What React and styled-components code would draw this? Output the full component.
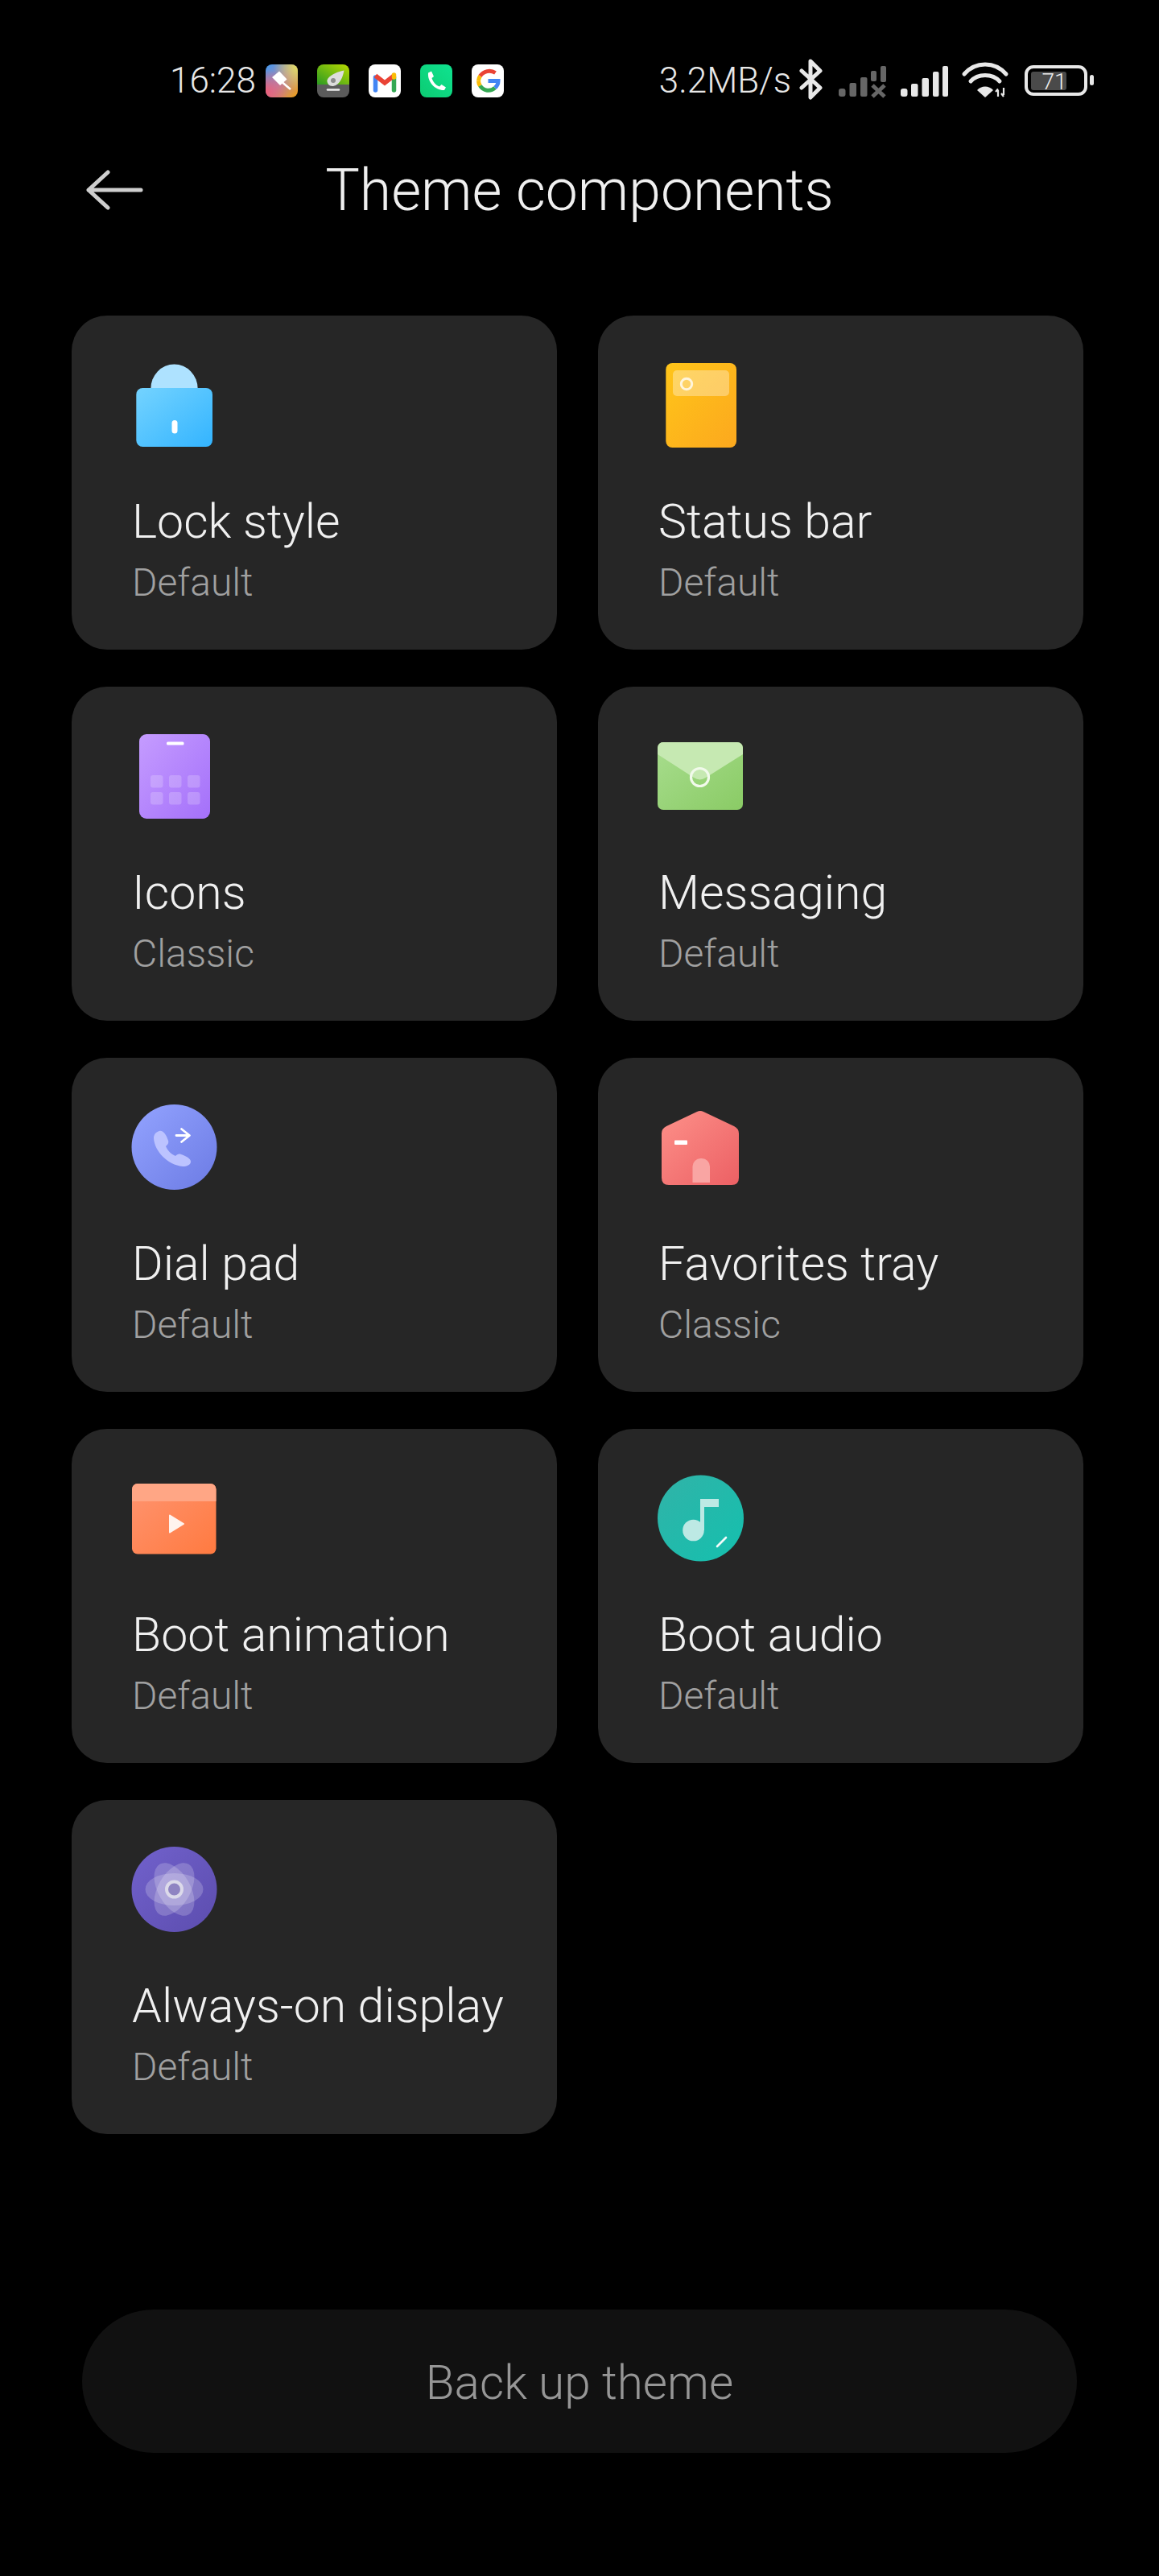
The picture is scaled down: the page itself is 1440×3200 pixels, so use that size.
import React from "react";
import styled, { createGlobalStyle } from "styled-components";

const Global = createGlobalStyle`
  html, body { margin: 0; padding: 0; background: #000; }
  body { font-family: Roboto, "Liberation Sans", sans-serif; font-weight: 300; }
`;

const Page = styled.div`
  width: 1440px;
  height: 3200px;
  background: #000;
  display: flex;
  flex-direction: column;
  overflow: hidden;
`;
const StatusBar = styled.div`
  display: flex;
  justify-content: space-between;
  align-items: center;
  height: 80px;
  margin-top: 60px;
  padding: 0 81px 0 211px;
  color: #e8e8e8;
`;
const StatusGroup = styled.div`
  display: flex;
  align-items: center;
  gap: ${(p) => p.$gap}px;
`;
const StatusText = styled.span`
  font-size: 44px;
  line-height: 48px;
  margin-right: ${(p) => p.$after || 0}px;
`;
const AppBadge = styled.svg`
  width: 40px;
  height: 41px;
  display: block;
`;
const StatusGlyphs = styled.svg`
  width: 366px;
  height: 60px;
  display: block;
  margin-left: 10px;
`;
const Header = styled.header`
  display: grid;
  grid-template-columns: 1fr auto 1fr;
  align-items: center;
  height: 92px;
  margin-top: 50px;
  padding: 0 107px;
`;
const BackArrow = styled.svg`
  width: 72px;
  height: 50px;
  display: block;
`;
const Title = styled.h1`
  margin: 2px 0 0;
  font-size: 71.5px;
  line-height: 90px;
  font-weight: 300;
  color: #efefef;
`;
const Grid = styled.main`
  display: grid;
  grid-template-columns: 603px 603px;
  column-gap: 51px;
  row-gap: 46px;
  margin-top: 110px;
  padding-left: 89px;
`;
const Card = styled.section`
  height: 415px;
  box-sizing: border-box;
  background: #262626;
  border-radius: 44px;
  padding: 28px 0 0 75px;
  display: flex;
  flex-direction: column;
`;
const IconBox = styled.svg`
  width: 150px;
  height: 150px;
  display: block;
  margin-left: -24px;
  flex: none;
`;
const CardTitle = styled.div`
  margin-top: 38px;
  font-size: 59px;
  line-height: 80px;
  color: #f0f0f0;
  white-space: nowrap;
`;
const CardValue = styled.div`
  margin-top: 4px;
  font-size: 48px;
  line-height: 64px;
  color: #a0a0a0;
`;
const BackupButton = styled.button`
  margin: 218px 102px 0;
  height: 178px;
  padding: 4px 0 0;
  border: 0;
  border-radius: 89px;
  background: #111111;
  color: #969696;
  font-family: inherit;
  font-weight: 300;
  font-size: 58.5px;
`;

const Grad = ({ id, from, to }) => (
  <linearGradient id={id} x1="0" y1="0" x2="1" y2="1">
    <stop offset="0" stopColor={from} />
    <stop offset="1" stopColor={to} />
  </linearGradient>
);

const LockIcon = () => (
  <>
    <Grad id="gLock" from="#74d3ff" to="#33b4ff" />
    <path d="M47.3 63a29.2 30.5 0 0 1 58.4 0z" fill="#aee2ff" />
    <rect x="29.3" y="62" width="94.7" height="73" rx="8" fill="url(#gLock)" />
    <rect x="73.5" y="102" width="7" height="16.5" rx="3.5" fill="#fff" />
  </>
);
const StatusIcon = () => (
  <>
    <Grad id="gStatus" from="#ffc519" to="#fca81e" />
    <rect x="37.3" y="31" width="87.7" height="105" rx="8" fill="url(#gStatus)" />
    <rect x="46" y="40" width="70" height="32" rx="5" fill="#fff" fillOpacity=".33" />
    <circle cx="63" cy="57" r="6.7" fill="none" stroke="#fff5dc" strokeWidth="3" />
  </>
);
const AppsIcon = () => (
  <>
    <Grad id="gApps" from="#c59cff" to="#a470fa" />
    <rect x="33" y="22" width="88" height="105" rx="9" fill="url(#gApps)" />
    <rect x="67" y="31.5" width="21.5" height="4" rx="1.5" fill="#fff" />
    {[47, 70, 93].flatMap((x) =>
      [73, 94].map((y) => (
        <rect key={`${x}-${y}`} x={x} y={y} width="15.5" height="15.5" rx="3" fill="#fff" fillOpacity=".2" />
      ))
    )}
  </>
);
const MessageIcon = () => (
  <>
    <Grad id="gMsg" from="#a8dd8e" to="#8acb65" />
    <rect x="27" y="32" width="106" height="84" rx="7" fill="url(#gMsg)" />
    <path d="M27 47V39a7 7 0 0 1 7-7h92a7 7 0 0 1 7 7v8l-46 29a14 14 0 0 1-15 0z" fill="#c6e9b2" />
    <circle cx="79.5" cy="75.5" r="11" fill="none" stroke="#f1faeb" strokeWidth="3.2" />
  </>
);
const DialIcon = () => (
  <>
    <Grad id="gDial" from="#93a3ff" to="#6c7be4" />
    <circle cx="76.5" cy="75" r="53" fill="url(#gDial)" />
    <path
      d="M58 55C62 54 66 58 69 67C70 70 68 72 66 74C68 79 73 84 78 86C80 84 82 83 85 84C91 86 97 89 97 93C97 97 92 99 87 99C68 97 52 80 51 64C51 59 54 56 58 55Z"
      fill="#bcc3ff"
    />
    <path d="M79 60.5H95M85.5 52.5L95.5 60.5L85.5 68.5" fill="none" stroke="#fff" strokeWidth="2.8" strokeLinecap="round" strokeLinejoin="round" />
  </>
);
const HomeIcon = () => (
  <>
    <Grad id="gHome" from="#fd9089" to="#ec6064" />
    <path d="M76 31Q80 29 84 31L122 49Q128 52 128 58V113Q128 122 119 122H41Q32 122 32 113V58Q32 52 38 49Z" fill="url(#gHome)" />
    <rect x="48" y="66.5" width="16" height="5.5" rx="1" fill="#fff" />
    <path d="M70.5 99a10 10 0 0 1 10-10h1.500a10 10 0 0 1 10 10v20h-21.500z" fill="#f9a5a3" />
  </>
);
const VideoIcon = () => (
  <>
    <Grad id="gVideo" from="#ff9470" to="#ff7a40" />
    <rect x="24" y="33" width="104.500" height="87.500" rx="7" fill="url(#gVideo)" />
    <path d="M24 55V40a7 7 0 0 1 7-7h90.500a7 7 0 0 1 7 7v15z" fill="#ffa685" />
    <path d="M71 72.500L88 83L71 93.500Z" fill="#fff3ee" stroke="#fff3ee" strokeWidth="2" strokeLinejoin="round" />
  </>
);
const MusicIcon = () => (
  <>
    <Grad id="gMusic" from="#31b3a8" to="#14c0ae" />
    <circle cx="80.500" cy="76" r="53.500" fill="url(#gMusic)" />
    <circle cx="71.500" cy="91" r="13.300" fill="#bde9e4" />
    <path d="M80 91V52H103V62H85V91Z" fill="#bde9e4" />
    <path d="M101 111L112 100" stroke="#f2fbfa" strokeWidth="2.600" strokeLinecap="round" />
  </>
);
const FlowerIcon = () => (
  <>
    <Grad id="gFlower" from="#7161cc" to="#5c4dae" />
    <circle cx="76.500" cy="77" r="53" fill="url(#gFlower)" />
    {[0, 60, 120].map((a) => (
      <ellipse key={a} cx="76.500" cy="77" rx="36" ry="20" fill="#fff" fillOpacity=".2" transform={`rotate(${a} 76.500 77)`} />
    ))}
    <circle cx="76.500" cy="77" r="9.500" fill="#8f84c2" stroke="#dcdaea" strokeWidth="4" />
  </>
);

const items = [
  { name: "Lock style", value: "Default", Icon: LockIcon, view: "0 0 150 150" },
  { name: "Status bar", value: "Default", Icon: StatusIcon, view: "4 0 150 150" },
  { name: "Icons", value: "Classic", Icon: AppsIcon, view: "0 -9 150 150" },
  { name: "Messaging", value: "Default", Icon: MessageIcon, view: "4 -9 150 150" },
  { name: "Dial pad", value: "Default", Icon: DialIcon, view: "0 -8 150 150" },
  { name: "Favorites tray", value: "Classic", Icon: HomeIcon, view: "4 -8 150 150" },
  { name: "Boot animation", value: "Default", Icon: VideoIcon, view: "0 -7 150 150" },
  { name: "Boot audio", value: "Default", Icon: MusicIcon, view: "4 -7 150 150" },
  { name: "Always-on display", value: "Default", Icon: FlowerIcon, view: "0 -6 150 150" },
];

const PaintBadge = () => (
  <AppBadge viewBox="0 0 40 41">
    <defs>
      <linearGradient id="pA" x1="0" y1="0" x2="1" y2="1">
        <stop offset="0" stopColor="#3f9bf2" />
        <stop offset=".5" stopColor="#b583a8" />
        <stop offset="1" stopColor="#f0a012" />
      </linearGradient>
      <radialGradient id="pB" cx="1" cy="0.05" r=".75">
        <stop offset="0" stopColor="#e3e25f" />
        <stop offset="1" stopColor="#e3e25f" stopOpacity="0" />
      </radialGradient>
      <radialGradient id="pC" cx="0" cy="0.85" r=".7">
        <stop offset="0" stopColor="#ee5f78" />
        <stop offset="1" stopColor="#ee5f78" stopOpacity="0" />
      </radialGradient>
      <clipPath id="pClip"><rect width="40" height="41" rx="8" /></clipPath>
    </defs>
    <g clipPath="url(#pClip)">
      <rect width="40" height="41" fill="url(#pA)" />
      <rect width="40" height="41" fill="url(#pB)" />
      <rect width="40" height="41" fill="url(#pC)" />
    </g>
    <path d="M8 16L17 8.500L26.500 18.500L18 26Z" fill="#fff" />
    <path d="M21 22.500L31 31" stroke="#fff" strokeWidth="2.600" />
  </AppBadge>
);
const LeafBadge = () => (
  <AppBadge viewBox="0 0 40 41">
    <defs>
      <linearGradient id="lA" x1="0" y1="1" x2="1" y2="0">
        <stop offset="0" stopColor="#2b9a22" />
        <stop offset="1" stopColor="#b9da00" />
      </linearGradient>
      <clipPath id="lClip"><rect width="40" height="41" rx="8" /></clipPath>
    </defs>
    <g clipPath="url(#lClip)">
      <rect width="40" height="25" fill="url(#lA)" />
      <rect y="25" width="40" height="16" fill="#5b5b5b" />
    </g>
    <path d="M33.500 7.500C32 15 29 25 20 27C15 27.500 12 23.500 12.500 19.500C14 14 25 9 33.500 7.500Z" fill="#ddd" />
    <circle cx="20" cy="20" r="3" fill="#8c8c8c" />
    <path d="M13 31.500H27" stroke="#eee" strokeWidth="2.600" strokeLinecap="round" />
  </AppBadge>
);
const GmailBadge = () => (
  <AppBadge viewBox="0 0 40 41">
    <rect width="40" height="41" rx="8" fill="#fff" />
    <path d="M8.500 16V32" stroke="#4285f4" strokeWidth="5.500" strokeLinecap="round" />
    <path d="M31.500 16V32" stroke="#34a853" strokeWidth="5.500" strokeLinecap="round" />
    <path d="M8.500 14L20 23L31.500 14" fill="none" stroke="#ea4335" strokeWidth="5.500" />
    <path d="M31.500 16V13" stroke="#fbbc04" strokeWidth="5.500" strokeLinecap="round" />
  </AppBadge>
);
const PhoneBadge = () => (
  <AppBadge viewBox="0 0 40 41">
    <defs>
      <linearGradient id="phA" x1="0" y1="1" x2="1" y2="0">
        <stop offset="0" stopColor="#0ccb72" />
        <stop offset="1" stopColor="#0fe390" />
      </linearGradient>
    </defs>
    <rect width="40" height="41" rx="8" fill="url(#phA)" />
    <path d="M10 10.500L14 8.500L17 15L14.500 17C16 22 19.500 26 24 27.500L26.500 25L32 28.500L30 32C19 32.500 9 22 10 10.500Z" fill="#fff" />
  </AppBadge>
);
const GoogleBadge = () => (
  <AppBadge viewBox="0 0 40 41">
    <rect width="40" height="41" rx="8" fill="#fff" />
    <g fill="none" strokeWidth="5">
      <path d="M10.500 14.500A14 14 0 0 1 29.500 10.500" stroke="#ea4335" />
      <path d="M8.500 20.500A12 12 0 0 1 10.500 14.500" stroke="#fbbc05" />
      <path d="M10.500 26.500A12 12 0 0 1 8.500 20.500" stroke="#fbbc05" />
      <path d="M29 29A12 12 0 0 1 10.500 26.500" stroke="#34a853" />
      <path d="M20.500 20.500H33C33 24 31.500 27 29 29" stroke="#4285f4" />
    </g>
  </AppBadge>
);

const Glyphs = () => (
  <StatusGlyphs viewBox="993 70 366 60">
    <path d="M996 88L1019 109L1007 121V76L1019 88L996 109" fill="none" stroke="#e8e8e8" strokeWidth="5" strokeLinejoin="round" strokeLinecap="round" />
    <g fill="#666">
      <rect x="1042" y="110" width="8.500" height="10" rx="3" />
      <rect x="1055.500" y="103" width="8.500" height="17" rx="2" />
      <rect x="1069" y="96" width="8.500" height="24" rx="2" />
      <rect x="1082" y="88" width="7" height="13" rx="2" />
      <rect x="1094" y="82" width="7" height="20" rx="2" />
      <path d="M1084 106L1099 120M1099 106L1084 120" stroke="#666" strokeWidth="5" />
    </g>
    <g fill="#e8e8e8">
      <rect x="1119" y="110" width="8.500" height="10" rx="3" />
      <rect x="1132" y="104" width="8.500" height="16" rx="2" />
      <rect x="1145.500" y="97" width="8.500" height="23" rx="2" />
      <rect x="1159" y="89" width="7.500" height="31" rx="2" />
      <rect x="1171" y="82" width="7" height="38" rx="2" />
    </g>
    <g fill="none" stroke="#e8e8e8" strokeWidth="5" strokeLinecap="round">
      <path d="M1198 92C1212 76 1236 76 1250 92" />
      <path d="M1206 101C1215 91 1233 91 1242 101" />
    </g>
    <path d="M1214 112C1219 106 1229 106 1234 112L1224 121Z" fill="#e8e8e8" />
    <path d="M1240 120V112M1237 114L1240 110.500M1247 109V118M1244 116L1247 120" fill="none" stroke="#e8e8e8" strokeWidth="2.200" />
    <rect x="1275" y="83" width="74" height="34" rx="9" fill="none" stroke="#e8e8e8" strokeWidth="4" />
    <rect x="1281" y="89" width="44" height="23" rx="3" fill="#4a4a4a" />
    <rect x="1354" y="93" width="5" height="13" rx="2.500" fill="#e8e8e8" />
    <text x="1310" y="111" textAnchor="middle" fontFamily="Roboto, sans-serif" fontWeight="300" fontSize="28" fill="#eee">71</text>
  </StatusGlyphs>
);

export default function App() {
  return (
    <>
      <Global />
      <Page>
        <StatusBar>
          <StatusGroup $gap={24}>
            <StatusText $after={-12}>16:28</StatusText>
            <PaintBadge />
            <LeafBadge />
            <GmailBadge />
            <PhoneBadge />
            <GoogleBadge />
          </StatusGroup>
          <StatusGroup $gap={0}>
            <StatusText>3.2MB/s</StatusText>
            <Glyphs />
          </StatusGroup>
        </StatusBar>
        <Header>
          <BackArrow viewBox="0 0 72 50">
            <path d="M3 25H68M27 3L3 25L27 47" fill="none" stroke="#cfcfcf" strokeWidth="5" strokeLinecap="round" strokeLinejoin="round" />
          </BackArrow>
          <Title>Theme components</Title>
        </Header>
        <Grid>
          {items.map(({ name, value, Icon, view }) => (
            <Card key={name}>
              <IconBox viewBox={view}>
                <Icon />
              </IconBox>
              <CardTitle>{name}</CardTitle>
              <CardValue>{value}</CardValue>
            </Card>
          ))}
        </Grid>
        <BackupButton>Back up theme</BackupButton>
      </Page>
    </>
  );
}
